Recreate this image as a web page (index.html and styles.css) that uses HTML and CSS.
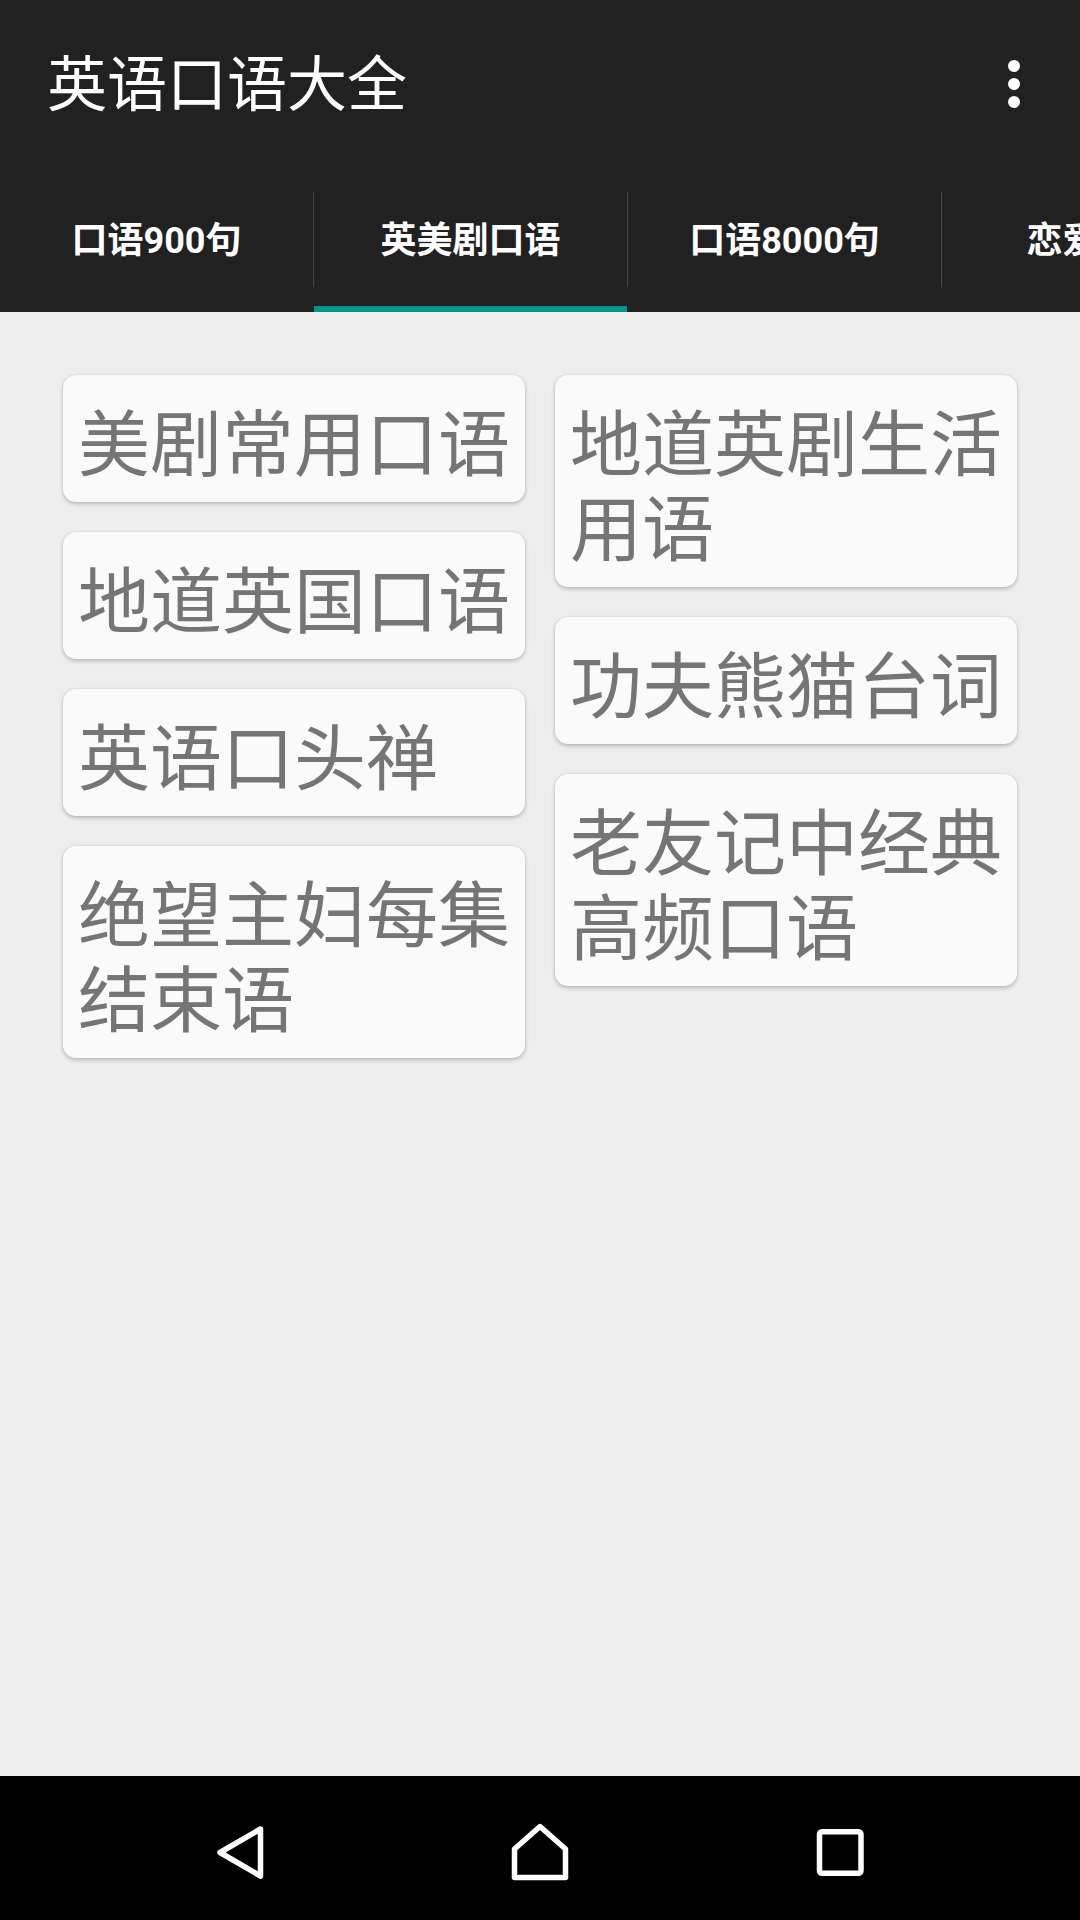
FILE: index.html
```html
<!DOCTYPE html>
<html>
<head>
	<title>英语口语大全</title>
	<link rel="stylesheet" href="styles.css">
</head>
<body>
	<div class="screen">
		<div class="header">
			<div class="toolbar">
				<h1 class="title">英语口语大全</h1>
				<svg class="menu" width="24" height="60" viewBox="0 0 24 60">
					<circle cx="12" cy="16" r="6" fill="#fff"/>
					<circle cx="12" cy="34" r="6" fill="#fff"/>
					<circle cx="12" cy="52" r="6" fill="#fff"/>
				</svg>
			</div>
			<div class="tabs">
				<div class="tab">口语900句</div>
				<div class="divider"></div>
				<div class="tab active">英美剧口语</div>
				<div class="divider"></div>
				<div class="tab">口语8000句</div>
				<div class="divider"></div>
				<div class="tab">恋爱英语</div>
			</div>
		</div>

		<div class="content">
			<div class="column">
				<div class="card">美剧常用口语</div>
				<div class="card">地道英国口语</div>
				<div class="card">英语口头禅</div>
				<div class="card">绝望主妇每集结束语</div>
			</div>
			<div class="column">
				<div class="card">地道英剧生活用语</div>
				<div class="card">功夫熊猫台词</div>
				<div class="card">老友记中经典高频口语</div>
			</div>
		</div>

		<div class="navbar">
			<div class="nav-btn">
				<svg width="60" height="60" viewBox="0 0 60 60">
					<path d="M50.5 7 L10 30.5 L50.5 54 Z" fill="none" stroke="#fff" stroke-width="5.5" stroke-linejoin="round"/>
				</svg>
			</div>
			<div class="nav-btn">
				<svg width="60" height="60" viewBox="0 0 60 60">
					<path d="M4.5 27 L30 4.5 L55.5 27 V55.5 H4.5 Z" fill="none" stroke="#fff" stroke-width="5.5" stroke-linejoin="round"/>
				</svg>
			</div>
			<div class="nav-btn">
				<svg width="60" height="60" viewBox="0 0 60 60">
					<rect x="9.5" y="9.7" width="41.5" height="41.5" rx="2.5" fill="none" stroke="#fff" stroke-width="5.5"/>
				</svg>
			</div>
		</div>
	</div>
</body>
</html>
```

FILE: styles.css
```css
body {
	margin: 0;
	padding: 0;
	font-family: "Noto Sans CJK SC", "Noto Sans", sans-serif;
	background-color: #eeeeee;
}

.screen {
	width: 1080px;
	height: 1920px;
	display: flex;
	flex-direction: column;
	overflow: hidden;
}

.header {
	background-color: #212121;
	height: 312px;
	display: flex;
	flex-direction: column;
}

.toolbar {
	height: 168px;
	display: flex;
	align-items: flex-start;
	justify-content: space-between;
	padding: 50px 54px 0 47px;
	box-sizing: border-box;
}

.title {
	margin: 0;
	color: #fff;
	font-size: 60px;
	font-weight: normal;
	line-height: 60px;
}

.tabs {
	height: 144px;
	display: flex;
	align-items: stretch;
	overflow: hidden;
}

.tab {
	flex: 0 0 313px;
	display: flex;
	align-items: center;
	justify-content: center;
	box-sizing: border-box;
	color: #fff;
	font-family: Roboto, "Noto Sans CJK SC", sans-serif;
	font-weight: bold;
	font-size: 36px;
	white-space: nowrap;
	border-bottom: 6px solid transparent;
}

.tab.active {
	border-bottom-color: #009688;
}

.divider {
	flex: 0 0 1px;
	margin: 24px 0 25px;
	background-color: #444;
}

.content {
	flex: 1;
	display: flex;
	gap: 30px;
	padding: 63px 63px 0;
	align-items: flex-start;
}

.column {
	width: 462px;
	display: flex;
	flex-direction: column;
	gap: 30px;
}

.card {
	background-color: #fafafa;
	border-radius: 13px;
	box-shadow: 0 2px 4px rgba(0, 0, 0, 0.22), 0 0 2px rgba(0, 0, 0, 0.1);
	padding: 21px 12px 21px 15px;
	color: #757575;
	font-size: 72px;
	line-height: 85px;
}

.navbar {
	height: 144px;
	background-color: #000;
	display: flex;
	justify-content: center;
	align-items: center;
	padding-top: 8px;
	box-sizing: border-box;
}

.nav-btn {
	width: 300px;
	display: flex;
	justify-content: center;
}

.nav-btn svg {
	display: block;
}
```
